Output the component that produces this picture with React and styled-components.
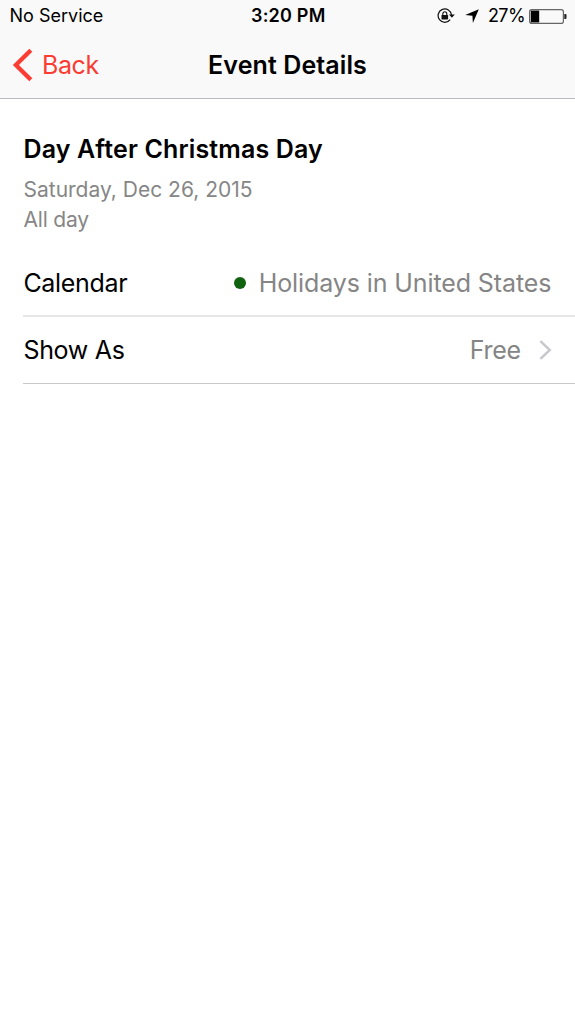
import styled, { createGlobalStyle } from 'styled-components'

const GlobalStyle = createGlobalStyle`
    * {
        box-sizing: border-box;
    }
    body {
        margin: 0;
        background: #fff;
        font-family: Inter, 'Liberation Sans', sans-serif;
        color: #000;
    }
`

const Screen = styled.main`
    min-height: 100vh;
    background: #fff;
`

const Header = styled.header`
    height: 99px;
    background: #f9f9f9;
    border-bottom: 1px solid #bcbbc0;
`

const StatusBar = styled.div`
    display: grid;
    grid-template-columns: 1fr auto 1fr;
    align-items: center;
    height: 32px;
    padding: 0 8px 0 9.5px;
    font-size: 18px;
    line-height: 32px;
`

const Carrier = styled.span`
    letter-spacing: 0;
`

const Time = styled.span`
    font-weight: 600;
    letter-spacing: 0.2px;
`

const StatusIcons = styled.div`
    display: flex;
    justify-content: flex-end;
    align-items: center;
`

const LockIcon = styled.svg`
    margin-right: 10px;
`

const ArrowIcon = styled.svg`
    margin-right: 9px;
`

const Percent = styled.span`
    margin-right: 4px;
    letter-spacing: -0.6px;
`

const NavBar = styled.nav`
    display: grid;
    grid-template-columns: 1fr auto 1fr;
    align-items: center;
    height: 66px;
    padding: 0 12px;
    font-size: 25px;
`

const BackButton = styled.a`
    display: flex;
    align-items: center;
    gap: 8px;
    color: #fb3c32;
    letter-spacing: -0.4px;
`

const NavTitle = styled.h1`
    margin: 0;
    font-size: 25px;
    font-weight: 600;
    letter-spacing: 0.1px;
`

const Summary = styled.section`
    padding: 34px 23px 16px 23.5px;
`

const EventTitle = styled.h2`
    margin: 0 0 10px;
    font-size: 25px;
    line-height: 32px;
    font-weight: 600;
    letter-spacing: 0.15px;
`

const EventTime = styled.p`
    margin: 0;
    font-size: 21px;
    line-height: 30px;
    color: #868686;
    letter-spacing: ${({ spacing }) => spacing};
`

const Row = styled.div`
    display: flex;
    justify-content: space-between;
    align-items: center;
    height: ${({ height }) => height};
    margin-left: 23px;
    padding-right: 23px;
    border-bottom: ${({ line }) => line};
    font-size: 25px;
`

const Label = styled.span`
    padding-left: 0.4px;
    letter-spacing: -0.3px;
`

const Value = styled.span`
    display: flex;
    align-items: center;
    color: #858585;
    letter-spacing: ${({ spacing }) => spacing};
`

const Dot = styled.span`
    width: 12px;
    height: 12px;
    margin-right: 13px;
    border-radius: 50%;
    background: #11620f;
`

const CalendarName = styled.span`
    margin-right: 0.7px;
`

const Chevron = styled.svg`
    margin-left: 18px;
`

const App = () => {
    return (
        <Screen>
            <GlobalStyle />
            <Header>
                <StatusBar>
                    <Carrier>No Service</Carrier>
                    <Time>3:20 PM</Time>
                    <StatusIcons>
                        <LockIcon width="18" height="16" viewBox="0 0 18 16">
                            <path d="M13.2 11.6A6.7 6.7 0 1 1 14.5 7" fill="none" stroke="#111" strokeWidth="1.2" />
                            <path d="M12 6.6h5.8l-2.9 3.2z" fill="#111" />
                            <rect x="4.5" y="7" width="6.6" height="4.4" rx="0.6" fill="#111" />
                            <path d="M5.8 7.4V5.9a2 2.1 0 0 1 4 0v1.5" fill="none" stroke="#111" strokeWidth="1.1" />
                        </LockIcon>
                        <ArrowIcon width="14" height="14" viewBox="0 0 14 14">
                            <path d="M13.8 0.2L7.9 13.9l-0.5-7.2L0.2 6.1z" fill="#000" />
                        </ArrowIcon>
                        <Percent>27%</Percent>
                        <svg width="38" height="15" viewBox="0 0 38 15">
                            <rect x="0.6" y="0.6" width="33.8" height="13.8" rx="2.2" fill="none" stroke="#666" strokeWidth="1.2" />
                            <path d="M1.8 1.6h8.4v11.8H1.8z" fill="#000" />
                            <path d="M35.3 5h1.2q1 0 1 1v3q0 1-1 1h-1.2z" fill="#222" />
                        </svg>
                    </StatusIcons>
                </StatusBar>
                <NavBar>
                    <BackButton>
                        <svg width="22" height="34" viewBox="0 0 22 34">
                            <path d="M18.8 2.2L3.9 17l14.9 14.8" fill="none" stroke="#fb3c32" strokeWidth="4.3" />
                        </svg>
                        Back
                    </BackButton>
                    <NavTitle>Event Details</NavTitle>
                </NavBar>
            </Header>
            <Summary>
                <EventTitle>Day After Christmas Day</EventTitle>
                <EventTime spacing="0">Saturday, Dec 26, 2015</EventTime>
                <EventTime spacing="-0.2px">All day</EventTime>
            </Summary>
            <Row height="66px" line="2px solid #e6e6e7">
                <Label>Calendar</Label>
                <Value spacing="-0.1px">
                    <Dot />
                    <CalendarName>Holidays in United States</CalendarName>
                </Value>
            </Row>
            <Row height="67px" line="1px solid #c8c7cc">
                <Label>Show As</Label>
                <Value spacing="-0.2px">
                    Free
                    <Chevron width="13" height="20" viewBox="0 0 13 20">
                        <path d="M1.4 1.2L10.8 10l-9.4 8.8" fill="none" stroke="#c7c7cc" strokeWidth="2.4" />
                    </Chevron>
                </Value>
            </Row>
        </Screen>
    )
}

export default App
